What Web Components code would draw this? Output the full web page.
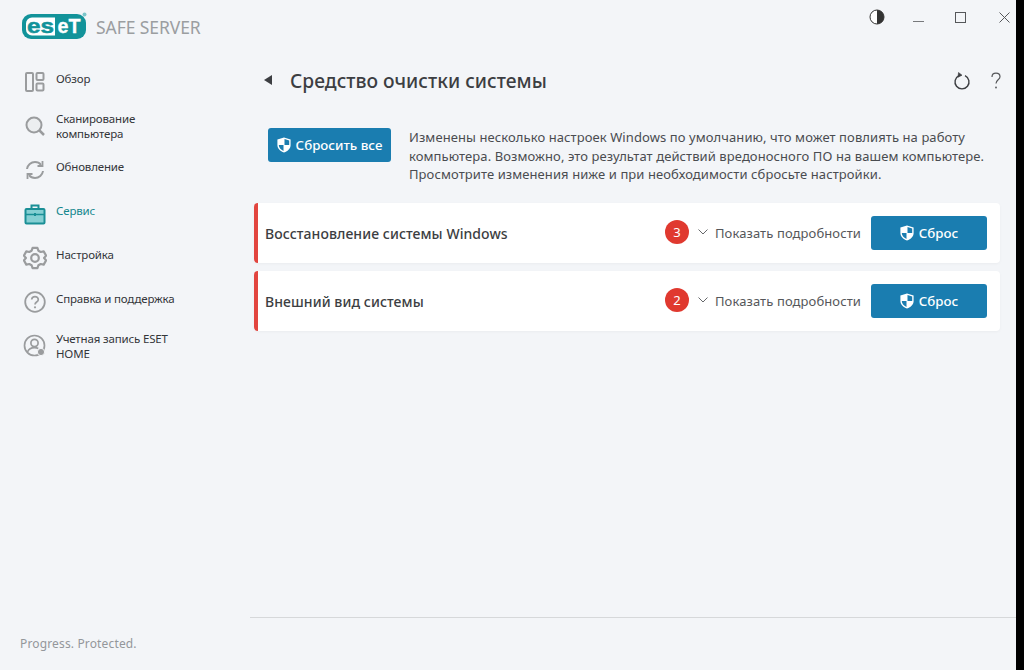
<!DOCTYPE html>
<html lang="ru">
<head>
<meta charset="utf-8">
<title>ESET Safe Server</title>
<style>
  html, body { margin: 0; height: 100%; background: #000; }
  body { font-family: "Noto Sans", sans-serif; overflow: hidden; }
</style>
</head>
<body>
<eset-app>
  <nav-item slot="nav" label="Обзор" icon="overview"></nav-item>
  <nav-item slot="nav" label="Сканирование<br>компьютера" icon="scan" two></nav-item>
  <nav-item slot="nav" label="Обновление" icon="update"></nav-item>
  <nav-item slot="nav" label="Сервис" icon="tools" active></nav-item>
  <nav-item slot="nav" label="Настройка" icon="setup"></nav-item>
  <nav-item slot="nav" label="Справка и поддержка" icon="help"></nav-item>
  <nav-item slot="nav" label="Учетная запись ESET<br>HOME" icon="account" two></nav-item>

  <page-head slot="head">Средство очистки системы</page-head>

  <intro-block slot="body">
    Изменены несколько настроек Windows по умолчанию, что может повлиять на работу<br>
    компьютера. Возможно, это результат действий вредоносного ПО на вашем компьютере.<br>
    Просмотрите изменения ниже и при необходимости сбросьте настройки.
  </intro-block>
  <cleaner-card slot="body" count="3">Восстановление системы Windows</cleaner-card>
  <cleaner-card slot="body" count="2">Внешний вид системы</cleaner-card>
</eset-app>

<script>
const shield = `<svg width="14" height="16" viewBox="0 0 14 16">
  <path d="M7 .4 13.600 2.500V8c0 3.400-2.700 6.100-6.600 7.600C3.100 14.100.4 11.400.4 8V2.500Z" fill="#fff"/>
  <path d="M7.500 2.100 12.200 3.500V8H7.500ZM6.500 8v5.900C3.700 12.700 1.800 10.600 1.800 8Z" fill="#1a7db0"/>
</svg>`;

const navIcons = {
  overview: `<svg width="22" height="22" viewBox="0 0 22 22" fill="none" stroke="#9a9c9e" stroke-width="2">
    <rect x="2" y="2" width="7" height="18" rx="1"/><rect x="12.500" y="2" width="7" height="7" rx="1"/><rect x="12.500" y="12.500" width="7" height="7" rx="1"/></svg>`,
  scan: `<svg width="22" height="22" viewBox="0 0 22 22" fill="none" stroke="#9a9c9e">
    <circle cx="10" cy="10" r="7.500" stroke-width="2" fill="#eceef0"/><path d="M15.500 15.500 20 20" stroke-width="2.500"/></svg>`,
  update: `<svg width="22" height="22" viewBox="0 0 22 22" fill="none" stroke="#9a9c9e" stroke-width="2">
    <path d="M3 10C3.500 6 7 3 11 3c2.600 0 4.600 1 6 2.800"/><path d="M19 12c-.5 4-4 7-8 7-2.600 0-4.600-1-6-2.800"/>
    <path d="M18.500 2v5h-5" stroke-width="1.800"/><path d="M3.500 20v-5h5" stroke-width="1.800"/></svg>`,
  tools: `<svg width="22" height="22" viewBox="0 0 22 22" fill="none" stroke="#1a8f96" stroke-width="2">
    <rect x="1.500" y="6" width="19" height="14.500" rx="1" fill="#85cfd3"/>
    <path d="M7.500 6V2.500h7V6"/><path d="M1.500 11.500h19" stroke-width="1.500"/><path d="M11 10v3" stroke-width="2"/></svg>`,
  setup: `<svg width="24" height="24" viewBox="0 0 24 24" fill="none" stroke="#9a9c9e" stroke-width="2.200" stroke-linejoin="round">
    <path d="M9.600 1.800h4.800l1 2.900 2.300 1.300 3-.6 2.400 4.200-2 2.400 2 2.400-2.400 4.200-3-.6-2.300 1.300-1 2.900H9.600l-1-2.900-2.300-1.300-3 .6L.9 14.400l2-2.400-2-2.400 2.400-4.200 3 .6 2.300-1.300Z"/>
    <circle cx="12" cy="12" r="3.800"/></svg>`,
  help: `<svg width="22" height="22" viewBox="0 0 22 22" fill="none" stroke="#9a9c9e" stroke-width="1.800">
    <circle cx="11" cy="11" r="9.800"/><path d="M7.700 8.500C7.900 6.600 9.300 5.600 11 5.600c1.800 0 3.300 1.100 3.300 2.800 0 2.600-3.300 2.600-3.300 5.100" stroke-width="1.700"/><circle cx="11" cy="16.300" r="1.100" fill="#9a9c9e" stroke="none"/></svg>`,
  account: `<svg width="24" height="24" viewBox="0 0 24 24" fill="none" stroke="#9a9c9e" stroke-width="1.700">
    <circle cx="11.500" cy="11.500" r="10"/><circle cx="11.500" cy="9" r="3.600"/><path d="M4.500 18c1.200-3 3.800-4.300 7-4.300 1.500 0 2.800.3 3.800.9"/>
    <circle cx="18" cy="18" r="3.600" fill="#9a9c9e" stroke="#f3f5f8" stroke-width="1"/></svg>`
};

function makeTemplate(html) {
  const t = document.createElement('template');
  t.innerHTML = html;
  return t;
}

class EsetBase extends HTMLElement {
  mount(template) {
    this.attachShadow({ mode: 'open' });
    this.shadowRoot.appendChild(template.content.cloneNode(true));
  }
}

// whole window, the black strip on the right comes from the body background
const appTemplate = makeTemplate(`
<style>
  :host { display: grid; grid-template-columns: 250px 766px; width: 1016px; height: 670px; background: #f3f5f8; color: #3c3e42; }
  .side { display: flex; flex-direction: column; }
  .logo { display: flex; align-items: flex-start; height: 60px; padding: 12px 0 0 22px; box-sizing: border-box; }
  .product { font-size: 17.500px; color: #9b9ea1; margin: 5px 0 0 8px; line-height: 20px; letter-spacing: -.08px; }
  .nav { flex: 1; display: flex; flex-direction: column; }
  .motto { font-size: 12px; color: #94979b; padding: 0 0 18px 20px; line-height: 16px; letter-spacing: .15px; }
  .main { display: flex; flex-direction: column; }
  .controls { display: flex; height: 59px; }
  .body { flex: 1; display: flex; flex-direction: column; }
  .foot { height: 52px; border-top: 1px solid #d6d8da; }
  .wc { display: flex; padding: 9px 0 0 619px; }
  .wc svg { display: block; }
</style>
<div class="side">
  <div class="logo">
    <svg width="66" height="28" viewBox="0 0 66 28">
      <rect x="0" y="2" width="64" height="25" rx="9" fill="#12939a"/>
      <path d="M10 5.500H33V23.500H10a6 6 0 0 1-6-6V11.500a6 6 0 0 1 6-6Z" fill="#fff"/>
      <text x="5" y="21" font-family="Liberation Sans" font-weight="700" font-size="21" fill="#12939a" stroke="#12939a" stroke-width=".5" textLength="27" lengthAdjust="spacingAndGlyphs">es</text>
      <text x="35.500" y="21" font-family="Liberation Sans" font-weight="700" font-size="21" fill="#fff" stroke="#fff" stroke-width=".3" textLength="23" lengthAdjust="spacingAndGlyphs">eT</text>
      <circle cx="62.500" cy="2.500" r="2" fill="#7cc6ca"/>
    </svg>
    <span class="product">SAFE SERVER</span>
  </div>
  <div class="nav"><slot name="nav"></slot></div>
  <div class="motto">Progress. Protected.</div>
</div>
<div class="main">
  <div class="controls"><div class="wc">
    <svg width="16" height="16" viewBox="0 0 16 16"><circle cx="8" cy="8" r="7" fill="#fff" stroke="#333" stroke-width="1"/><path d="M8 1a7 7 0 0 1 0 14Z" fill="#333"/></svg>
    <svg width="11" height="24" viewBox="0 0 11 24" style="margin-left:28px"><path d="M0 12.500h11" stroke="#77797c"/></svg>
    <svg width="12" height="12" viewBox="0 0 12 12" style="margin:3px 0 0 31px"><rect x=".5" y=".5" width="10" height="10" fill="none" stroke="#55575a"/></svg>
    <svg width="11" height="11" viewBox="0 0 11 11" style="margin:3px 0 0 32px"><path d="M.5.500l10 10M10.500.500l-10 10" stroke="#55575a" fill="none"/></svg>
  </div></div>
  <slot name="head"></slot>
  <div class="body"><slot name="body"></slot></div>
  <div class="foot"></div>
</div>`);

class EsetApp extends EsetBase {
  constructor() { super(); this.mount(appTemplate); }
}

const navTemplate = makeTemplate(`
<style>
  :host { display: flex; height: 44px; padding-left: 23px; box-sizing: border-box; align-items: flex-start; font-size: 11.500px; letter-spacing: -.16px; line-height: 15px; color: #34363a; }
  :host([active]) { color: #14878e; }
  .ico { width: 24px; height: 24px; margin-top: 10px; display: flex; align-items: center; justify-content: center; flex: none; }
  .lbl { margin: 11px 0 0 9px; white-space: nowrap; }
  :host([two]) .lbl { margin-top: 7px; }
</style>
<span class="ico"></span><span class="lbl"></span>`);

class NavItem extends EsetBase {
  constructor() { super(); this.mount(navTemplate); }
  connectedCallback() {
    this.shadowRoot.querySelector('.ico').innerHTML = navIcons[this.getAttribute('icon')];
    this.shadowRoot.querySelector('.lbl').innerHTML = this.getAttribute('label');
  }
}

const headTemplate = makeTemplate(`
<style>
  :host { display: flex; align-items: center; height: 44px; padding-left: 14px; box-sizing: border-box; color: #3c3e42; }
  .back { width: 0; height: 0; border: 5px solid transparent; border-right: 8px solid #3c3e42; border-left: 0; margin: -3px 18px 0 0; }
  h1 { flex: 1; margin: 0; font-size: 19.200px; font-weight: 500; line-height: 44px; letter-spacing: .03px; }
  .tools { display: flex; align-items: center; padding-right: 13px; gap: 18px; }
  svg { display: block; }
</style>
<span class="back"></span>
<h1><slot></slot></h1>
<div class="tools">
  <svg width="18" height="20" viewBox="0 0 18 20" fill="none" stroke="#3c3e42" stroke-width="1.400"><path d="M6 4.600a7 7 0 1 0 6 0"/><path d="M5.500 1.500 9 4.200 5 6.200Z" fill="#3c3e42" stroke-width=".6"/></svg>
  <svg width="14" height="20" viewBox="0 0 14 20" fill="none" stroke="#55575a" stroke-width="1.200"><path d="M3 6c0-2.400 1.800-3.800 4-3.800S11 3.600 11 5.700c0 3-4 3.300-4 6.800"/><circle cx="7" cy="16.500" r=".9" fill="#55575a" stroke="none"/></svg>
</div>`);

class PageHead extends EsetBase {
  constructor() { super(); this.mount(headTemplate); }
}

const buttonTemplate = makeTemplate(`
<style>
  :host { display: inline-flex; align-items: center; justify-content: center; gap: 5px; height: 34px; background: #1a7db0; color: #fff; border-radius: 3px; font-size: 13.300px; font-weight: 500; box-sizing: border-box; flex: none; }
  svg { display: block; margin-top: -1px; }
</style>
<span class="i"></span><slot></slot>`);

class ResetButton extends EsetBase {
  constructor() { super(); this.mount(buttonTemplate); this.shadowRoot.querySelector('.i').innerHTML = shield; }
}

const introTemplate = makeTemplate(`
<style>
  :host { display: flex; align-items: flex-start; padding: 0 0 0 18px; margin: 21px 0 17px; height: 62px; font-size: 13px; line-height: 18.500px; color: #4a4c50; }
  reset-button { width: 123px; margin-top: 4px; }
  p { margin: 0 0 0 18px; padding-top: 4px; white-space: nowrap; letter-spacing: .085px; }
</style>
<reset-button>Сбросить все</reset-button>
<p><slot></slot></p>`);

class IntroBlock extends EsetBase {
  constructor() { super(); this.mount(introTemplate); }
}

const cardTemplate = makeTemplate(`
<style>
  :host { display: flex; align-items: center; width: 746px; height: 60px; margin: 0 0 8px 4px; background: #fff; border-left: 4px solid #e2453f; border-radius: 4px; box-sizing: border-box; padding-left: 7px; box-shadow: 0 1px 3px rgba(0,0,0,.04); }
  .name { flex: 1; font-size: 14px; font-weight: 500; letter-spacing: .07px; color: #3c3e42; }
  .count { width: 24px; height: 24px; border-radius: 50%; background: #e0392f; color: #fff; font-size: 13px; display: flex; align-items: center; justify-content: center; margin-top: -2px; }
  svg.chev { display: block; margin: -2px 7px 0 9px; }
  .more { font-size: 13px; letter-spacing: .1px; color: #55575a; margin-right: 10px; white-space: nowrap; }
  reset-button { width: 116px; margin-right: 13px; }
</style>
<span class="name"><slot></slot></span>
<span class="count"></span>
<svg class="chev" width="10" height="6" viewBox="0 0 10 6"><path d="M.5.500 5 5 9.500.500" fill="none" stroke="#66686b"/></svg>
<span class="more">Показать подробности</span>
<reset-button>Сброс</reset-button>`);

class CleanerCard extends EsetBase {
  constructor() { super(); this.mount(cardTemplate); }
  connectedCallback() {
    this.shadowRoot.querySelector('.count').textContent = this.getAttribute('count');
  }
}

customElements.define('eset-app', EsetApp);
customElements.define('nav-item', NavItem);
customElements.define('page-head', PageHead);
customElements.define('reset-button', ResetButton);
customElements.define('intro-block', IntroBlock);
customElements.define('cleaner-card', CleanerCard);
</script>
</body>
</html>
